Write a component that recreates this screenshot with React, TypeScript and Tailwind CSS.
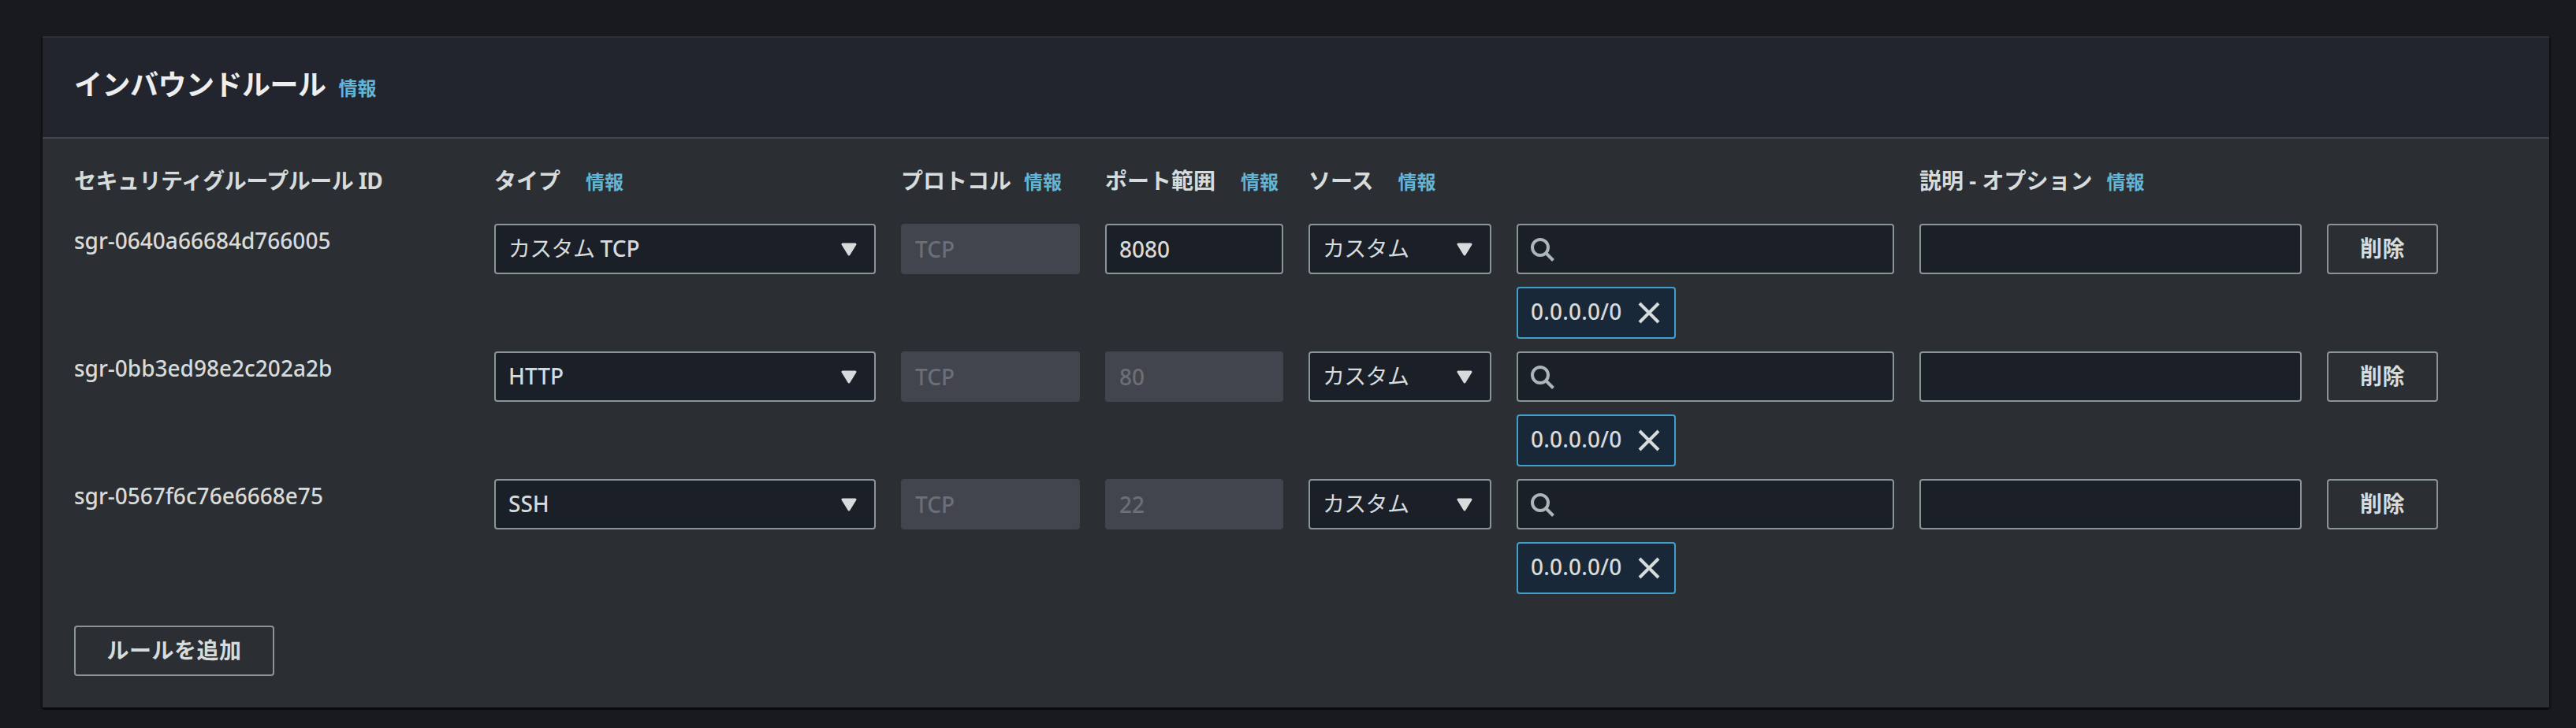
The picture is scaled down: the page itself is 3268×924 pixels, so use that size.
import React from "react";

const GRID =
  "grid grid-cols-[501px_484px_227px_226px_232px_479px_485px_141px] gap-x-8";

type Rule = {
  id: string;
  type: React.ReactNode;
  protocol: string;
  port: string;
  portEditable: boolean;
  cidr: string;
};

const rules: Rule[] = [
  {
    id: "sgr-0640a66684d766005",
    type: (
      <>
        <span className="font-normal tracking-[-0.7px]">カスタム</span> TCP
      </>
    ),
    protocol: "TCP",
    port: "8080",
    portEditable: true,
    cidr: "0.0.0.0/0",
  },
  { id: "sgr-0bb3ed98e2c202a2b", type: "HTTP", protocol: "TCP", port: "80", portEditable: false, cidr: "0.0.0.0/0" },
  { id: "sgr-0567f6c76e6668e75", type: "SSH", protocol: "TCP", port: "22", portEditable: false, cidr: "0.0.0.0/0" },
];

function InfoLink() {
  return <a className="text-[24px] leading-[32px] font-bold text-[#62b5d5]">情報</a>;
}

function ColumnHeader({ label, gap }: { label: string; gap?: string }) {
  return (
    <div className={`flex items-baseline whitespace-nowrap ${gap ?? ""}`}>
      <span className={gap ? "font-bold" : "font-bold tracking-[-0.5px]"}>{label}</span>
      {gap && <InfoLink />}
    </div>
  );
}

function Select({ value }: { value: React.ReactNode }) {
  return (
    <div className="flex h-16 items-center justify-between rounded-[4px] border-2 border-[#899596] bg-[#1b1f28] pr-[22px] pl-4">
      <span className="pb-[2px] leading-[44px] font-medium">{value}</span>
      <svg width="20" height="17" viewBox="0 0 20 17" className="block">
        <path d="M2 2h16l-8 13z" fill="#d6dbdb" stroke="#d6dbdb" strokeWidth="3" strokeLinejoin="round" />
      </svg>
    </div>
  );
}

function Field({ value, disabled }: { value?: string; disabled?: boolean }) {
  return (
    <div
      className={
        disabled
          ? "h-16 rounded-[4px] border-2 border-[#42454e] bg-[#42454e] px-4 pt-[8px] leading-[44px] font-medium text-[#6a6f78]"
          : "h-16 rounded-[4px] border-2 border-[#899596] bg-[#1b1f28] px-4 pt-[8px] leading-[44px] font-medium"
      }
    >
      {value}
    </div>
  );
}

function SearchField() {
  return (
    <div className="flex h-16 items-center rounded-[4px] border-2 border-[#899596] bg-[#1b1f28] pl-4">
      <svg width="32" height="32" viewBox="0 0 32 32" className="block" fill="none" stroke="#aab6b7" strokeWidth="4">
        <circle cx="12" cy="14" r="10" />
        <path d="M19 21l9.5 9.5" />
      </svg>
    </div>
  );
}

function Token({ value }: { value: string }) {
  return (
    <div className="flex h-[66px] w-[202px] items-center justify-between rounded-[4px] border-2 border-[#419fc9] bg-[#192839] pr-[18px] pb-px pl-4">
      <span className="pb-[3px] leading-[44px] font-medium tracking-[0.2px]">{value}</span>
      <svg width="28" height="28" viewBox="0 0 28 28" className="block" stroke="#d6dbdb" strokeWidth="4">
        <path d="M2 2l24 24M26 2L2 26" />
      </svg>
    </div>
  );
}

function Button({ children, width }: { children: React.ReactNode; width: string }) {
  return (
    <button
      className={`block h-16 rounded-[4px] border-2 border-[#899596] pb-[2px] text-center font-bold tracking-[0.5px] whitespace-nowrap ${width}`}
    >
      {children}
    </button>
  );
}

export default function App() {
  return (
    <div className="h-[924px] w-[3268px] bg-[#191a1f] pt-[46px] pl-[54px] font-['Noto_Sans','Noto_Sans_CJK_JP',sans-serif] text-[28px] leading-[44px] text-[#d6dbdb]">
      <section className="h-[852px] w-[3180px] border-t-2 border-[#2d2f32] bg-[#2b2e33] shadow-[0_2px_2px_0_rgba(0,0,0,0.6),2px_2px_2px_0_rgba(0,0,0,0.35),-2px_2px_2px_0_rgba(0,0,0,0.35)]">
        <header className="flex h-32 items-baseline gap-4 border-b-2 border-[#43454f] bg-[#22252e] px-10 pt-[38px]">
          <h2 className="text-[36px] leading-[44px] font-bold tracking-[-0.5px] text-[#edeeed]">インバウンドルール</h2>
          <InfoLink />
        </header>
        <div className="px-10 pt-[31px]">
          <div className={`${GRID} h-[77px]`}>
            <ColumnHeader label="セキュリティグループルール ID" />
            <ColumnHeader label="タイプ" gap="gap-8" />
            <ColumnHeader label="プロトコル" gap="gap-4" />
            <ColumnHeader label="ポート範囲" gap="gap-8" />
            <ColumnHeader label="ソース" gap="gap-[31px]" />
            <div />
            <ColumnHeader label="説明 - オプション" gap="gap-[18px]" />
          </div>
          <div className="flex flex-col gap-4">
            {rules.map((rule) => (
              <div key={rule.id} className={`${GRID} h-[146px] items-start`}>
                <span className="-mt-px font-medium">{rule.id}</span>
                <Select value={rule.type} />
                <Field value={rule.protocol} disabled />
                <Field value={rule.port} disabled={!rule.portEditable} />
                <Select value={<span className="font-normal tracking-[-0.7px]">カスタム</span>} />
                <div className="flex flex-col gap-4">
                  <SearchField />
                  <Token value={rule.cidr} />
                </div>
                <Field />
                <Button width="w-[141px]">削除</Button>
              </div>
            ))}
          </div>
          <div className="mt-10 flex">
            <Button width="w-[254px]">ルールを追加</Button>
          </div>
        </div>
      </section>
    </div>
  );
}
